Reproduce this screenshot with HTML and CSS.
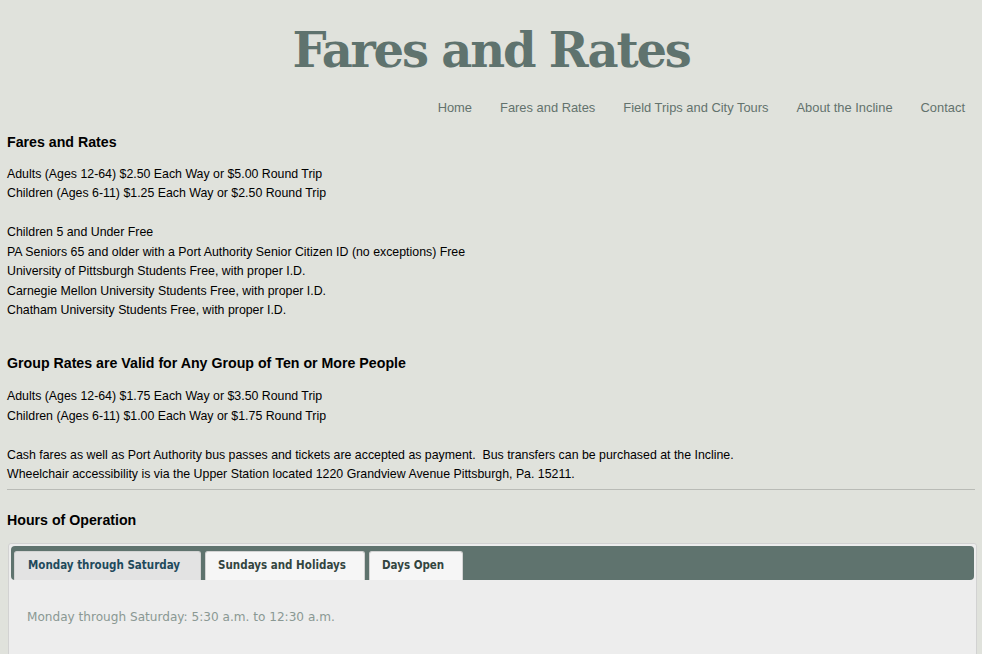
FILE: index.html
```html
<!DOCTYPE html>
<html lang="en">
<head>
<meta charset="utf-8">
<title>Fares and Rates</title>
<link rel="stylesheet" href="styles.css">
</head>
<body>
<header class="site-header">
  <h1 class="site-title">Fares and Rates</h1>
  <nav class="main-nav">
    <a href="#">Home</a>
    <a href="#">Fares and Rates</a>
    <a href="#">Field Trips and City Tours</a>
    <a href="#">About the Incline</a>
    <a href="#">Contact</a>
  </nav>
</header>
<main class="content">
  <h2 class="section-title first">Fares and Rates</h2>
  <p class="para first-para">Adults (Ages 12-64) $2.50 Each Way or $5.00 Round Trip<br>Children (Ages 6-11) $1.25 Each Way or $2.50 Round Trip</p>
  <p class="para">Children 5 and Under Free<br>PA Seniors 65 and older with a Port Authority Senior Citizen ID (no exceptions) Free<br>University of Pittsburgh Students Free, with proper I.D.<br>Carnegie Mellon University Students Free, with proper I.D.<br>Chatham University Students Free, with proper I.D.</p>
  <h2 class="section-title group">Group Rates are Valid for Any Group of Ten or More People</h2>
  <p class="para first-para group-para">Adults (Ages 12-64) $1.75 Each Way or $3.50 Round Trip<br>Children (Ages 6-11) $1.00 Each Way or $1.75 Round Trip</p>
  <p class="para">Cash fares as well as Port Authority bus passes and tickets are accepted as payment.&nbsp; Bus transfers can be purchased at the Incline.<br>Wheelchair accessibility is via the Upper Station located 1220 Grandview Avenue Pittsburgh, Pa. 15211.</p>
  <hr class="divider">
  <h2 class="section-title hours">Hours of Operation</h2>
  <div class="tabs">
    <ul class="tab-bar">
      <li class="tab active">Monday through Saturday</li>
      <li class="tab">Sundays and Holidays</li>
      <li class="tab">Days Open</li>
    </ul>
    <div class="tab-panel">
      <p class="panel-text">Monday through Saturday: 5:30 a.m. to 12:30 a.m.</p>
    </div>
  </div>
</main>
</body>
</html>
```
FILE: styles.css
```css
html, body {
  margin: 0;
  padding: 0;
}
body {
  background: #e0e2dc;
  font-family: "Liberation Sans", Arial, sans-serif;
  color: #000;
  overflow: hidden;
}
.site-header {
  display: flex;
  flex-direction: column;
}
.site-title {
  margin: 15px 0 0;
  text-align: center;
  font-family: "DejaVu Serif", "Liberation Serif", serif;
  font-weight: 900;
  font-size: 48px;
  line-height: 70px;
  letter-spacing: -2.2px;
  color: #5f736e;
}
.main-nav {
  display: flex;
  justify-content: flex-end;
  gap: 28px;
  padding: 0 17px 0 0;
  margin-top: 14px;
  font-size: 12.9px;
  line-height: 17px;
}
.main-nav a {
  color: #63726d;
  text-decoration: none;
}
.content {
  padding: 0 7px 0 7px;
  margin-top: 16px;
}
.section-title {
  margin: 0;
  font-size: 14.2px;
  line-height: 20px;
  font-weight: bold;
}
.section-title.group {
  margin-top: 32px;
}
.section-title.hours {
  margin-top: 20px;
}
.para {
  margin: 19.5px 0 0;
  font-size: 12.35px;
  line-height: 19.5px;
}
.para.first-para {
  margin-top: 12.5px;
}
.para.group-para {
  margin-top: 14.5px;
}
.divider {
  margin: 4px 0 0;
  border: 0;
  border-top: 1px solid #b9bbb6;
  height: 0;
}
.tabs {
  margin: 13px -2px 0 1px;
  border: 1px solid #d2d2d2;
  border-radius: 3px;
  background: #ededed;
  padding: 2px;
}
.tab-bar {
  list-style: none;
  margin: 0;
  padding: 5px 3px 0;
  display: flex;
  gap: 4px;
  background: #5f736e;
  border-radius: 4px;
  height: 29px;
  box-sizing: content-box;
}
.tab {
  font-family: "DejaVu Sans Condensed", "DejaVu Sans", Verdana, sans-serif;
  font-stretch: condensed;
  font-size: 11.5px;
  font-weight: bold;
  line-height: 27px;
  height: 28px;
  padding: 0 18px 0 12px;
  background: #f6f6f6;
  border: 1px solid #d3d3d3;
  border-bottom: 0;
  border-radius: 3px 3px 0 0;
  color: #33453f;
}
.tab.active {
  background: #e3e3e3;
  color: #1f4a5c;
  padding: 0 20px 0 13px;
}
.tab-panel {
  padding: 29px 16px 30px;
}
.panel-text {
  margin: 0;
  font-family: "DejaVu Sans", Verdana, sans-serif;
  font-size: 12.1px;
  line-height: 16px;
  color: #8a9893;
}
```
